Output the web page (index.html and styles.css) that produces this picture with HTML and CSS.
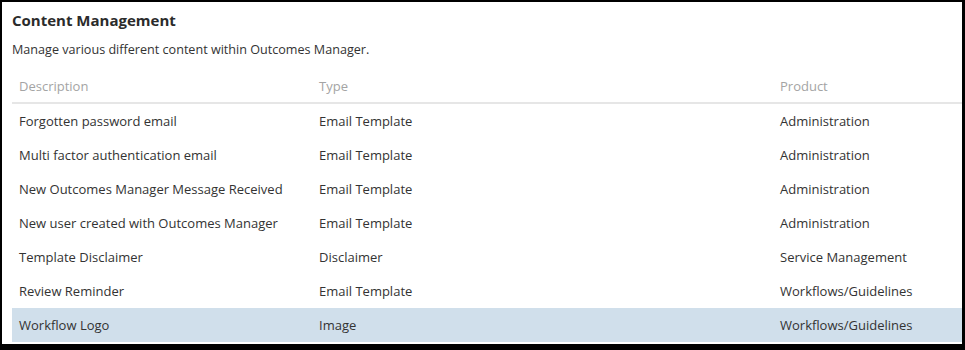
FILE: index.html
```html
<!DOCTYPE html>
<html lang="en">
<head>
    <meta charset="UTF-8">
    <title>Content Management</title>
    <link rel="stylesheet" href="styles.css">
</head>
<body>
    <div class="frame">
        <h2 class="title">Content Management</h2>
        <p class="subtitle">Manage various different content within Outcomes Manager.</p>

        <table class="content-table">
            <thead>
                <tr>
                    <th class="col-desc">Description</th>
                    <th class="col-type">Type</th>
                    <th>Product</th>
                </tr>
            </thead>
            <tbody>
                <tr><td>Forgotten password email</td><td>Email Template</td><td>Administration</td></tr>
                <tr><td>Multi factor authentication email</td><td>Email Template</td><td>Administration</td></tr>
                <tr><td>New Outcomes Manager Message Received</td><td>Email Template</td><td>Administration</td></tr>
                <tr><td>New user created with Outcomes Manager</td><td>Email Template</td><td>Administration</td></tr>
                <tr><td>Template Disclaimer</td><td>Disclaimer</td><td>Service Management</td></tr>
                <tr><td>Review Reminder</td><td>Email Template</td><td>Workflows/Guidelines</td></tr>
                <tr class="selected"><td>Workflow Logo</td><td>Image</td><td>Workflows/Guidelines</td></tr>
            </tbody>
        </table>
    </div>
</body>
</html>
```

FILE: styles.css
```css
html, body { margin: 0; padding: 0; background: #fff; }
body { font-family: "Open Sans", "Noto Sans", Arial, sans-serif; color: #333; }

.frame { width: 965px; height: 350px; box-sizing: border-box; border: 2px solid #000; border-right-width: 3px; border-bottom-width: 6px; padding: 8px 0 0 10px; overflow: hidden; }

.title { margin: 0; font-size: 15px; font-weight: 700; line-height: 20px; color: #2b2b2b; }
.subtitle { margin: 11px 0 0; font-size: 12.6px; line-height: 18px; }

.content-table { border-collapse: collapse; width: 960px; margin-top: 11px; table-layout: fixed; font-size: 13px; }
.content-table th { text-align: left; font-weight: 400; color: #a4a4a4; height: 32px; padding: 0 7px; border-bottom: 2px solid #e6e6e6; }
.content-table td { height: 34px; padding: 0 7px; white-space: nowrap; }
.col-desc { width: 286px; }
.col-type { width: 447px; }
.selected td { background: #d0dfeb; }
```
